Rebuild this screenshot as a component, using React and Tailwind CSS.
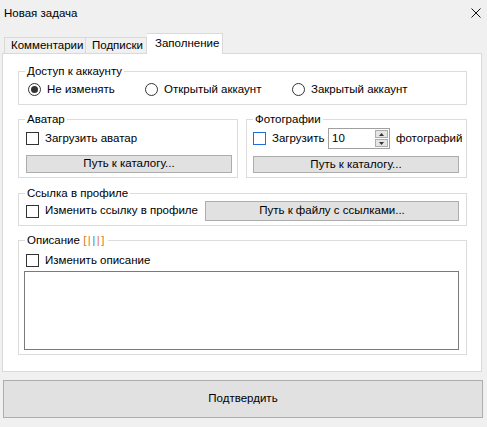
import React from 'react'

const FONT = { fontFamily: '"Liberation Sans", Arial, sans-serif' }

function Check({ blue }) {
  return (
    <span
      className={`inline-block w-[13px] h-[13px] shrink-0 bg-white border ${blue ? 'border-[#1e6fd9]' : 'border-[#333333]'}`}
    />
  )
}

function Radio({ checked }) {
  return (
    <span className="w-[13px] h-[13px] shrink-0 rounded-full border border-[#333333] bg-white flex items-center justify-center">
      {checked && <span className="w-[7px] h-[7px] rounded-full bg-[#333333]" />}
    </span>
  )
}

function WinButton({ children, className = '' }) {
  return (
    <div className={`bg-[#e1e1e1] border border-[#adadad] flex items-center justify-center text-[11.5px] leading-none ${className}`}>
      {children}
    </div>
  )
}

function Group({ title, className = '', children }) {
  return (
    <fieldset className={`border border-[#dcdcdc] m-0 p-0 min-w-0 ${className}`}>
      <legend className="ml-[6px] px-[2px] text-[11.5px] leading-[14px]">{title}</legend>
      {children}
    </fieldset>
  )
}

export default function App() {
  return (
    <div className="w-[487px] h-[427px] bg-[#f0f0f0] text-black overflow-hidden" style={FONT}>
      {/* title bar */}
      <div className="h-[33px] flex items-start justify-between">
        <div className="pl-[4px] pt-[6px] text-[11.5px] leading-[14px]">Новая задача</div>
        <svg className="mt-[8px] mr-[6px]" width="10" height="10" viewBox="0 0 10 10">
          <path d="M0.5 0.5 L9.5 9.5 M9.5 0.5 L0.5 9.5" stroke="#111" strokeWidth="1" fill="none" />
        </svg>
      </div>

      {/* tabs */}
      <div className="pl-[4px] h-[20px] flex items-end text-[11.5px]">
        <div className="h-[16px] w-[82px] border border-b-0 border-[#d9d9d9] pl-[6px] flex items-center">Комментарии</div>
        <div className="h-[16px] w-[61px] border border-l-0 border-b-0 border-[#d9d9d9] pl-[6px] flex items-center">Подписки</div>
        <div className="relative z-10 h-[21px] w-[76px] mb-[-1px] bg-white border border-l-0 border-b-0 border-[#d9d9d9] pl-[8px] pb-[1px] flex items-center">Заполнение</div>
      </div>

      {/* tab panel */}
      <div className="ml-[2px] w-[480px] h-[319px] bg-white border border-[#d9d9d9] pl-[15px] pt-[10px]">
        <Group title="Доступ к аккаунту" className="w-[449px] h-[41px]">
          <div className="mt-[5px] pl-[9px] flex items-center h-[13px] text-[11.5px]">
            <div className="w-[117px] flex items-center gap-[6px]"><Radio checked />Не изменять</div>
            <div className="w-[147px] flex items-center gap-[6px]"><Radio />Открытый аккаунт</div>
            <div className="flex items-center gap-[6px]"><Radio />Закрытый аккаунт</div>
          </div>
        </Group>

        <div className="mt-[7px] flex gap-[8px]">
          <Group title="Аватар" className="w-[220px] h-[66px]">
            <div className="pl-[7px] mt-[2px] h-[21px] flex items-center gap-[6px] text-[11.5px]">
              <Check />Загрузить аватар
            </div>
            <WinButton className="ml-[7px] mt-[6px] w-[206px] h-[18px]">Путь к каталогу...</WinButton>
          </Group>
          <Group title="Фотографии" className="w-[221px] h-[66px]">
            <div className="pl-[6px] mt-[2px] h-[21px] flex items-center text-[11.5px]">
              <Check blue />
              <span className="ml-[6px] w-[53px] shrink-0">Загрузить</span>
              <div className="ml-[3px] w-[62px] h-[21px] shrink-0 border border-[#a0a0a0] bg-white flex items-center justify-between">
                <span className="pl-[3px]">10</span>
                <div className="mr-[1px] w-[13px] h-[17px] flex flex-col gap-[1px]">
                  <div className="flex-1 bg-[#e5e5e5] border border-[#adadad] flex items-center justify-center">
                    <svg width="5" height="3" viewBox="0 0 5 3"><path d="M2.5 0 L5 3 L0 3 Z" fill="#333" /></svg>
                  </div>
                  <div className="flex-1 bg-[#e5e5e5] border border-[#adadad] flex items-center justify-center">
                    <svg width="5" height="3" viewBox="0 0 5 3"><path d="M0 0 L5 0 L2.5 3 Z" fill="#333" /></svg>
                  </div>
                </div>
              </div>
              <span className="ml-[6px] whitespace-nowrap">фотографий</span>
            </div>
            <WinButton className="ml-[6px] mt-[7px] w-[206px] h-[17px]">Путь к каталогу...</WinButton>
          </Group>
        </div>

        <Group title="Ссылка в профиле" className="mt-[8px] w-[449px] h-[40px]">
          <div className="pl-[7px] mt-[1px] flex items-center text-[11.5px]">
            <div className="w-[179px] flex items-center gap-[6px]"><Check />Изменить ссылку в профиле</div>
            <WinButton className="w-[254px] h-[20px]">Путь к файлу с ссылками...</WinButton>
          </div>
        </Group>

        <Group
          title={
            <>
              Описание{' '}
              <span className="tracking-[1.5px]">
                <span className="text-[#e07a1f]">[</span>
                <span className="text-[#e07a1f]">|</span>
                <span className="text-[#3d7fd6]">|</span>
                <span className="text-[#e07a1f]">|</span>
                <span className="text-[#e07a1f]">]</span>
              </span>
            </>
          }
          className="mt-[7px] w-[449px] h-[122px]"
        >
          <div className="pl-[7px] mt-[7px] h-[13px] flex items-center gap-[6px] text-[11.5px]">
            <Check />Изменить описание
          </div>
          <div className="ml-[5px] mt-[4px] w-[435px] h-[79px] border border-[#7a7a7a] bg-white" />
        </Group>
      </div>

      <WinButton className="ml-[3px] mt-[8px] w-[480px] h-[38px]">Подтвердить</WinButton>
    </div>
  )
}
